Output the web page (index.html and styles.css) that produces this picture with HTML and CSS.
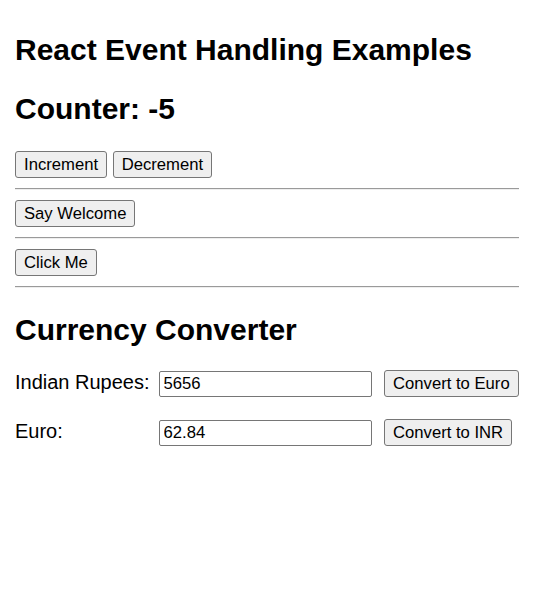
FILE: index.html
```html
<!DOCTYPE html>
<html lang="en">
<head>
<meta charset="utf-8">
<title>React Event Handling Examples</title>
<link rel="stylesheet" href="styles.css">
</head>
<body>
<div class="app">
  <h2 class="title">React Event Handling Examples</h2>
  <h2 class="title">Counter: -5</h2>
  <div class="btn-row">
    <button class="btn">Increment</button>
    <button class="btn">Decrement</button>
  </div>
  <hr class="divider">
  <div class="btn-row">
    <button class="btn">Say Welcome</button>
  </div>
  <hr class="divider">
  <div class="btn-row">
    <button class="btn">Click Me</button>
  </div>
  <hr class="divider">
  <h2 class="title title-converter">Currency Converter</h2>
  <div class="converter">
    <div class="conv-row">
      <label class="conv-label">Indian Rupees:</label>
      <input class="conv-input" type="text" value="5656">
      <button class="btn">Convert to Euro</button>
    </div>
    <div class="conv-row">
      <label class="conv-label">Euro:</label>
      <input class="conv-input" type="text" value="62.84">
      <button class="btn">Convert to INR</button>
    </div>
  </div>
</div>
</body>
</html>
```

FILE: styles.css
```css
html, body {
  margin: 0;
  padding: 0;
  background: #ffffff;
}

body {
  font-family: "Liberation Sans", Arial, sans-serif;
  font-size: 20px;
  color: #000000;
}

.app {
  padding: 8px 15px;
}

.title {
  font-size: 30px;
  font-weight: bold;
  margin: 25px 0;
  line-height: normal;
}

.title-converter {
  margin-bottom: 23px;
}

.btn-row {
  display: flex;
  align-items: flex-start;
  gap: 5.6px;
}

.btn {
  font-family: "Liberation Sans", Arial, sans-serif;
  font-size: 16.67px;
  line-height: normal;
  color: #000000;
  background: #efefef;
  border: 1px solid #767676;
  border-radius: 3px;
  padding: 2.5px 8px;
  margin: 0;
}

.divider {
  margin: 10px 0;
  border: 0;
  border-top: 1px solid #9a9a9a;
  border-bottom: 1px solid #eeeeee;
  height: 0;
}

.converter {
  display: flex;
  flex-direction: column;
  gap: 22px;
}

.conv-row {
  display: flex;
  align-items: baseline;
}

.conv-label {
  flex: none;
  width: 143.5px;
}

.conv-input {
  flex: none;
  box-sizing: border-box;
  width: 213px;
  height: 26px;
  margin: 0 12.5px 0 0;
  padding: 1px 4px;
  font-family: "Liberation Sans", Arial, sans-serif;
  font-size: 16.67px;
  color: #000000;
  border: 1px solid #767676;
  border-radius: 2px;
  background: #ffffff;
}
```
